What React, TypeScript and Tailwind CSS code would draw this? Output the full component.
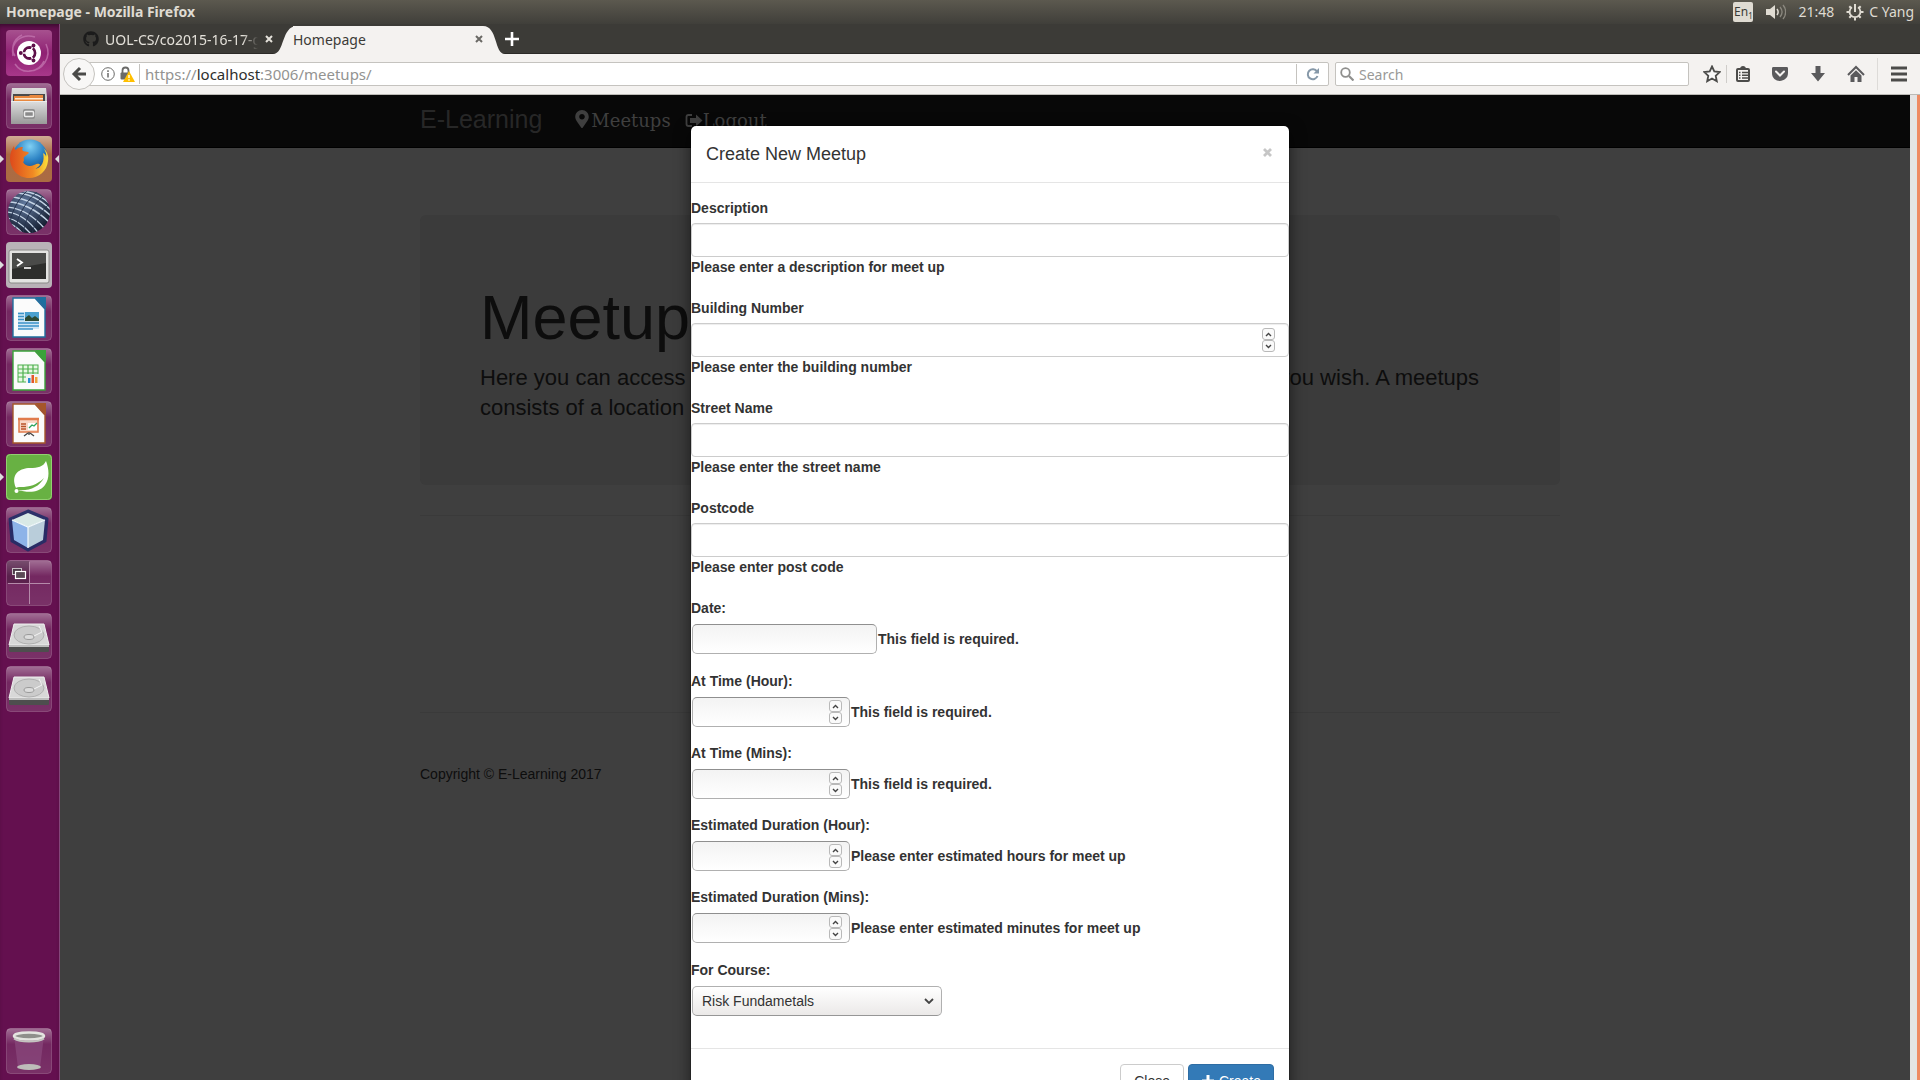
import React from "react";
import { FaGithub, FaMapMarkerAlt } from "react-icons/fa";

/* ---------- Launcher icons ---------- */

function UbuntuIcon() {
  return (
    <svg viewBox="0 0 46 46" className="size-full">
      <defs>
        <linearGradient id="ub" x1="0" y1="0" x2="0" y2="1">
          <stop offset="0" stopColor="#a7518f" />
          <stop offset="0.5" stopColor="#8f2173" />
          <stop offset="1" stopColor="#a8388a" />
        </linearGradient>
      </defs>
      <rect width="46" height="46" rx="4" fill="url(#ub)" />
      <path d="M7 26C4 12 16 3 29 7M40 14c6 13-3 27-17 27M9 34c8 12 24 8 29-3M16 5C6 10 5 20 9 26" fill="none" stroke="#c67bb4" strokeWidth="1.5" opacity="0.7" />
      <circle cx="23" cy="23" r="12" fill="#fff" />
      <circle cx="23.500" cy="23" r="5.500" fill="none" stroke="#5e1049" strokeWidth="2.800" />
      <g stroke="#fff" strokeWidth="1.500">
        <path d="M23.500 23l3.600-7M23.500 23l3.600 7M23.500 23h-8" />
      </g>
      <circle cx="23.500" cy="23" r="3.900" fill="#fff" />
      <g fill="#5e1049">
        <circle cx="14.800" cy="23" r="1.900" />
        <circle cx="27.500" cy="15.500" r="1.900" />
        <circle cx="27.500" cy="30.500" r="1.900" />
      </g>
    </svg>
  );
}

function Tile({ children, fill }: { children: React.ReactNode; fill?: string }) {
  return (
    <svg viewBox="0 0 46 46" className="size-full">
      <defs>
        <linearGradient id="tile" x1="0" y1="0" x2="0" y2="1">
          <stop offset="0" stopColor="#fff" stopOpacity="0.4" />
          <stop offset="0.35" stopColor="#fff" stopOpacity="0.1" />
          <stop offset="1" stopColor="#fff" stopOpacity="0.14" />
        </linearGradient>
        <linearGradient id="metal" x1="0" y1="0" x2="0" y2="1">
          <stop offset="0" stopColor="#dedede" />
          <stop offset="1" stopColor="#9a9a9a" />
        </linearGradient>
      </defs>
      <rect width="46" height="46" rx="4" fill={fill ?? "#64104f"} />
      {!fill && <rect x="0.500" y="0.500" width="45" height="45" rx="4" fill="url(#tile)" stroke="#fff" strokeOpacity="0.18" />}
      {children}
    </svg>
  );
}

function FilesIcon() {
  return (
    <Tile>
      <path d="M6 5h34l1 9v27H5V14z" fill="url(#metal)" />
      <path d="M7 11h32v9H7z" fill="#4b4b4b" />
      <path d="M8 13h15l1-1h13v7H8z" fill="#e8883e" />
      <rect x="9" y="15" width="28" height="1.500" fill="#ffe9cf" />
      <path d="M5 18h36v22a1 1 0 0 1-1 1H6a1 1 0 0 1-1-1z" fill="url(#metal)" />
      <path d="M5 18.500h36" stroke="#ececec" />
      <rect x="17" y="26" width="12" height="10" rx="2" fill="#8f8f8f" />
      <rect x="18.500" y="28.500" width="9" height="5" rx="1" fill="#8a8a8a" stroke="#ececec" strokeWidth="1.500" />
    </Tile>
  );
}

function FirefoxIcon() {
  return (
    <Tile fill="#a9683f">
      <defs>
        <linearGradient id="ffbg" x1="0" y1="0" x2="0" y2="1">
          <stop offset="0" stopColor="#fff" stopOpacity="0.45" />
          <stop offset="0.4" stopColor="#fff" stopOpacity="0.02" />
        </linearGradient>
        <radialGradient id="globe" cx="0.5" cy="0.2" r="0.8">
          <stop offset="0" stopColor="#7fd0f4" />
          <stop offset="0.5" stopColor="#2d83c4" />
          <stop offset="1" stopColor="#123a77" />
        </radialGradient>
        <linearGradient id="fox" x1="0" y1="0" x2="1" y2="0">
          <stop offset="0" stopColor="#dd4a1b" />
          <stop offset="0.6" stopColor="#f08a24" />
          <stop offset="1" stopColor="#fde03a" />
        </linearGradient>
      </defs>
      <rect width="46" height="46" rx="4" fill="url(#ffbg)" />
      <circle cx="24" cy="21" r="17.500" fill="url(#globe)" />
      <path d="M4 22c0-5 2-9 4-12 0 2 1 3 2 4 2-3 5-3 7-3-1 2-1 3 0 4 2 1 5 0 6 2l-5 4c-1 1 1 4-1 5 2 4 7 5 11 3 3-1 5-2 6 0-2 2-4 4-6 4 8 0 11-9 9-16 3 2 3 3 3 4 1-3-1-7-3-9 4 3 6 8 5 13-1 10-9 17-19 17C12 42 4 33 4 22z" fill="url(#fox)" />
    </Tile>
  );
}

function SphereIcon() {
  return (
    <Tile>
      <defs>
        <radialGradient id="sph" cx="0.4" cy="0.3" r="0.7">
          <stop offset="0" stopColor="#5f779c" />
          <stop offset="1" stopColor="#172033" />
        </radialGradient>
        <clipPath id="sphclip">
          <circle cx="23" cy="23" r="21" />
        </clipPath>
      </defs>
      <circle cx="23" cy="23" r="21" fill="url(#sph)" />
      <g clipPath="url(#sphclip)" fill="none" stroke="#c3d2e4" strokeWidth="1.400">
        <path d="M4 8c10 0 28 6 42 20M2 13c12 0 28 7 42 21M1 18c12 1 26 8 38 22M1 23c10 1 22 8 32 22M1 29c8 1 16 7 24 16M3 35c5 1 9 4 13 9M9 4c12 0 25 6 36 17M16 2c10 1 20 5 28 13" />
      </g>
      <g clipPath="url(#sphclip)" fill="none" stroke="#26344f" strokeWidth="1">
        <path d="M40 5C30 12 20 26 17 44M32 2C22 10 12 24 9 42M45 14C36 20 29 32 26 45M22 1C14 8 6 20 4 34" />
      </g>
    </Tile>
  );
}

function TerminalIcon() {
  return (
    <Tile fill="#b9b2b7">
      <rect x="3" y="8" width="40" height="33" rx="2" fill="#e3e3e1" stroke="#8a8a88" />
      <rect x="6" y="11" width="34" height="26" fill="#2d2e2c" />
      <path d="M6 11h34v10L6 27z" fill="#4a4b49" />
      <path d="M11 17l5 3.500-5 3.500" fill="none" stroke="#fff" strokeWidth="1.800" />
      <path d="M18 26h7" stroke="#fff" strokeWidth="1.600" />
    </Tile>
  );
}

function Doc({ color, children }: { color: string; children: React.ReactNode }) {
  return (
    <Tile>
      <path d="M7 3h22l10 11v28H7z" fill="#fbfbfb" stroke={color} strokeWidth="1.400" />
      <path d="M29 2h11v12z" fill={color} />
      {children}
    </Tile>
  );
}

function WriterIcon() {
  return (
    <Doc color="#1e6f9f">
      <rect x="12" y="17" width="21" height="17" fill="#cfe6f5" />
      <path d="M12 18.500h6M12 21.500h6M12 24.500h6M12 28h21M12 31h21M12 34h15" stroke="#3b93c9" strokeWidth="1.500" />
      <rect x="19" y="17" width="14" height="9" fill="#4aa0cf" />
      <path d="M19 26v-3l4-3 3 3 3-2 4 3v2z" fill="#2c4a34" />
    </Doc>
  );
}

function CalcIcon() {
  return (
    <Doc color="#3aa33a">
      <rect x="12" y="17" width="20" height="17" fill="#e8f8e4" stroke="#4db04d" />
      <path d="M12 21h20M12 25h20M12 29h20M17 17v17M22 17v17M27 17v17" stroke="#4db04d" strokeWidth="1.200" />
      <rect x="20" y="26" width="14" height="9" fill="#f2f2f2" />
      <rect x="22" y="30" width="2.500" height="5" fill="#2c8fd0" />
      <rect x="25.500" y="27" width="2.500" height="8" fill="#e2572b" />
      <rect x="29" y="29" width="2.500" height="6" fill="#f0a33a" />
    </Doc>
  );
}

function ImpressIcon() {
  return (
    <Doc color="#a5562a">
      <rect x="13" y="18" width="19" height="13" fill="#f9d9c7" stroke="#e07a4b" strokeWidth="1.500" />
      <path d="M12 18h21" stroke="#e07a4b" strokeWidth="2.500" />
      <path d="M15 23h5M15 25.500h5M15 28h5" stroke="#b9552b" strokeWidth="1.400" />
      <rect x="22" y="22" width="9" height="7" fill="#fff" />
      <path d="M23 27l3-3 2 1 3-3" fill="none" stroke="#2ca45c" strokeWidth="1.300" />
      <path d="M22 32l-4 3M24 32l4 3M23 31v3" stroke="#444" strokeWidth="1.300" />
    </Doc>
  );
}

function SpringIcon() {
  return (
    <Tile fill="#68b143">
      <rect x="0.500" y="0.500" width="45" height="45" rx="4" fill="none" stroke="#93cf72" />
      <path d="M40 7c3 8 4 17-1 24-6 8-17 8-27 5 12 1 21-3 26-12-7 7-15 9-23 9-3 0-4 0-5 1C4 20 14 14 24 14c8 0 13-1 16-7z" fill="#fff" />
      <circle cx="10.500" cy="37" r="2" fill="#fff" />
    </Tile>
  );
}

function CubeIcon() {
  return (
    <Tile>
      <path d="M22 4l19 8-2 22-17 9L6 34 4 12z" fill="#1c2c66" stroke="#1c2c66" strokeWidth="3" strokeLinejoin="round" opacity="0.85" />
      <path d="M22 6l17 7-17 7L6 13z" fill="#d9e9e6" />
      <path d="M6 13l16 7v21L8 33z" fill="#8db3e8" />
      <path d="M39 13l-17 7v21l15-8z" fill="#b9cdda" />
      <path d="M6 13l16 7 17-7M22 20v21" fill="none" stroke="#f3fafc" strokeWidth="1.200" />
    </Tile>
  );
}

function WorkspaceIcon() {
  return (
    <Tile>
      <rect x="1" y="1" width="22" height="22" fill="#2b1327" opacity="0.35" />
      <path d="M23.500 2v42M2 23.500h42" stroke="#b58aaa" strokeWidth="1" />
      <rect x="6.500" y="8.500" width="9" height="6" fill="#4a3a47" stroke="#c9bfc6" />
      <rect x="9.500" y="11.500" width="10" height="7" fill="#5a4a56" stroke="#fff" strokeWidth="1.200" />
    </Tile>
  );
}

function DriveIcon() {
  return (
    <Tile>
      <path d="M8 11h30l5 21H3z" fill="#d8d8d8" stroke="#efefef" />
      <path d="M3 32h40v6a1 1 0 0 1-1 1H5a2 2 0 0 1-2-1z" fill="#4e4e4e" />
      <path d="M3 32h40v2H3z" fill="#bdbdbd" />
      <ellipse cx="23" cy="22" rx="15" ry="9" fill="#cbcbcb" stroke="#b0b0b0" />
      <ellipse cx="23" cy="24" rx="5" ry="2.500" fill="#dcdcdc" stroke="#9a9a9a" />
      <path d="M33 13l3 6-8 4" fill="none" stroke="#f4f4f4" />
    </Tile>
  );
}

function TrashIcon() {
  return (
    <Tile>
      <path d="M8 8h30l-4 32H12z" fill="#8a4a7e" opacity="0.7" />
      <ellipse cx="23" cy="39" rx="12" ry="3" fill="#bdbdb9" />
      <ellipse cx="23" cy="8" rx="15" ry="3.500" fill="#8f8f8b" stroke="#e4e4e0" strokeWidth="2.500" />
      <path d="M8 10.500c6 4 24 4 30 0" fill="none" stroke="#c4c4c0" strokeWidth="2" />
    </Tile>
  );
}

type LauncherItem = { name: string; icon: React.ReactNode; running?: boolean; focused?: boolean };

const launcher: LauncherItem[] = [
  { name: "Search your computer", icon: <UbuntuIcon /> },
  { name: "Files", icon: <FilesIcon /> },
  { name: "Firefox", icon: <FirefoxIcon />, running: true, focused: true },
  { name: "Eclipse", icon: <SphereIcon /> },
  { name: "Terminal", icon: <TerminalIcon />, running: true },
  { name: "Writer", icon: <WriterIcon /> },
  { name: "Calc", icon: <CalcIcon /> },
  { name: "Impress", icon: <ImpressIcon /> },
  { name: "Spring Tool Suite", icon: <SpringIcon />, running: true },
  { name: "NetBeans", icon: <CubeIcon /> },
  { name: "Workspaces", icon: <WorkspaceIcon /> },
  { name: "Volume 1", icon: <DriveIcon /> },
  { name: "Volume 2", icon: <DriveIcon /> },
];

function Launcher() {
  return (
    <nav aria-label="Launcher" className="flex w-[60px] shrink-0 flex-col justify-between border-r border-[#84467a] bg-[#64104f] pt-1.5 pb-1.5 shadow-[inset_0_4px_4px_-2px_#3a0a2e]">
      <div className="flex flex-col gap-[7px]">
        {launcher.map((item) => (
          <div key={item.name} className="relative flex pl-1.5">
            {item.running && (
              <svg viewBox="0 0 4 8" className="absolute top-[19px] left-0 h-2 w-1">
                <path d="M0 0l4 4-4 4z" fill="#ddd" />
              </svg>
            )}
            <button aria-label={item.name} className="size-[46px]">{item.icon}</button>
            {item.focused && (
              <svg viewBox="0 0 4 8" className="absolute top-[19px] right-0 h-2 w-1">
                <path d="M4 0L0 4l4 4z" fill="#ddd" />
              </svg>
            )}
          </div>
        ))}
      </div>
      <div className="flex pl-1.5">
        <button aria-label="Trash" className="size-[46px]"><TrashIcon /></button>
      </div>
    </nav>
  );
}

/* ---------- System panel ---------- */

function TopPanel() {
  return (
    <header className="flex h-6 shrink-0 items-center justify-between bg-linear-to-b from-[#5c594f] to-[#403f3a] pr-1.5 pl-1.5 text-[#dfdbd2]">
      <span className="text-[14px] leading-5 font-bold">Homepage - Mozilla Firefox</span>
      <div className="flex items-center text-[14px] leading-5">
        <span className="mr-[13px] flex h-5 w-5 items-center justify-center rounded-xs bg-[#dfdbd2] text-[12px] text-[#3c3b37]">
          En<span className="self-end text-[8px] leading-3">1</span>
        </span>
        <svg viewBox="0 0 20 18" className="mr-3 h-[18px] w-5">
          <path d="M0 6h4l5-4v14l-5-4H0z" fill="#dfdbd2" />
          <path d="M11 6c1.500 2 1.500 4 0 6" fill="none" stroke="#dfdbd2" strokeWidth="1.500" />
          <path d="M14 4c2.500 3 2.500 7 0 10M17 2c3.500 4 3.500 10 0 14" fill="none" stroke="#8b887f" strokeWidth="1.300" />
        </svg>
        <span className="mr-3">21:48</span>
        <svg viewBox="0 0 18 18" className="mr-[5px] size-[18px]" fill="none" stroke="#dfdbd2">
          <path d="M6 4.300a5.400 5.400 0 1 0 6 0" strokeWidth="1.800" />
          <path d="M9 1v8" strokeWidth="2" />
          <path d="M3.300 3.300l2 2M14.700 3.300l-2 2M.500 9h3M17.500 9h-3M3.300 14.700l2-2M14.700 14.700l-2-2M9 17.500v-3" strokeWidth="2" />
        </svg>
        <span>C Yang</span>
      </div>
    </header>
  );
}

/* ---------- Browser chrome ---------- */

function Cross({ className }: { className: string }) {
  return (
    <svg viewBox="0 0 8 8" className={className}>
      <path d="M1 1l6 6M7 1L1 7" stroke="currentColor" strokeWidth="2" />
    </svg>
  );
}

function TabBar() {
  return (
    <div className="flex h-[30px] shrink-0 items-end border-b border-[#2b2a27] bg-[#3c3b37] text-[14px]">
      <div className="flex h-7 w-[213px] items-center pl-[23px] text-[#e4e1da]">
        <FaGithub className="mr-1.5 size-4 shrink-0 text-[#1b1b1b]" />
        <span className="w-[153px] overflow-hidden mask-r-from-90% whitespace-nowrap">UOL-CS/co2015-16-17-group</span>
        <button aria-label="Close tab" className="ml-[7px]"><Cross className="size-2" /></button>
      </div>
      <div className="-mb-px flex h-7 text-[#3c3b37]">
        <svg viewBox="0 0 24 28" className="h-7 w-6 shrink-0">
          <path d="M0 28C12 28 8 0 24 0v28z" fill="#f4f2f0" />
        </svg>
        <div className="-ml-1 flex w-[190px] items-center justify-between bg-[#f4f2f0] pb-0.5">
          <span>Homepage</span>
          <button aria-label="Close tab" className="text-[#6a6965]"><Cross className="size-2" /></button>
        </div>
        <svg viewBox="0 0 22 28" className="h-7 w-[22px] shrink-0">
          <path d="M22 28C11 28 15 0 0 0v28z" fill="#f4f2f0" />
        </svg>
      </div>
      <button aria-label="New tab" className="flex h-7 w-3.5 items-center justify-center">
        <svg viewBox="0 0 14 14" className="size-3.5 shrink-0">
          <path d="M7 0v14M0 7h14" stroke="#fff" strokeWidth="2.600" />
        </svg>
      </button>
    </div>
  );
}

function Toolbar() {
  return (
    <div className="flex h-[41px] shrink-0 items-center border-b border-[#bcbab6] bg-[#f4f2f0] pr-[13px] pl-[3px] text-[14px]">
      <button aria-label="Back" className="z-10 flex size-8 shrink-0 items-center justify-center rounded-full border border-[#c5c3bf] bg-[#f8f7f6]">
        <svg viewBox="0 0 16 16" className="size-4">
          <path d="M9 2L3 8l6 6M3 8h12" fill="none" stroke="#4a4a48" strokeWidth="3" />
        </svg>
      </button>
      <div className="-ml-4 flex h-6 flex-1 items-center rounded-xs border border-[#c5c3bf] bg-white pl-[21px]">
        <svg viewBox="0 0 14 14" className="mr-1 size-3.5 shrink-0" fill="none" stroke="#6a6a68">
          <circle cx="7" cy="7" r="6.300" />
          <path d="M7 6v4.500M7 3.300V5" strokeWidth="1.500" />
        </svg>
        <svg viewBox="0 0 16 16" className="mr-1 size-4 shrink-0">
          <path d="M3.500 7V4.500a3 3 0 0 1 6 0V7" fill="none" stroke="#6a6a68" strokeWidth="1.800" />
          <rect x="1.500" y="6.500" width="9.500" height="7" rx="1" fill="#6a6a68" />
          <path d="M10 5l6 11H4z" fill="#ffbf00" />
          <path d="M10 9v3M10 13.300v1.400" stroke="#fff" strokeWidth="1.400" />
        </svg>
        <div className="flex-1 border-l border-[#c5c3bf] pl-[5px] text-[15px] leading-5 text-[#939391]">
          https://<span className="text-[#2e2e2c]">localhost</span>:3006/meetups/
        </div>
        <button aria-label="Reload" className="flex h-5 w-8 items-center justify-center border-l border-[#c5c3bf]">
          <svg viewBox="0 0 14 14" className="size-3.5">
            <path d="M11 4.500A5 5 0 1 0 11.500 9" fill="none" stroke="#8698a8" strokeWidth="2" />
            <path d="M13 1v5.500H7.500z" fill="#8698a8" />
          </svg>
        </button>
      </div>
      <div className="ml-1.5 flex h-6 w-[354px] items-center rounded-xs border border-[#c5c3bf] bg-white pl-1">
        <svg viewBox="0 0 14 14" className="mr-[5px] size-3.5 shrink-0" fill="none" stroke="#8f8f8d">
          <circle cx="5.500" cy="5.500" r="4.300" strokeWidth="1.800" />
          <path d="M9 9l4.500 4.500" strokeWidth="2.200" />
        </svg>
        <input aria-label="Search" placeholder="Search" className="min-w-0 flex-1 outline-none placeholder:text-[#999997]" />
      </div>
      <div className="ml-3.5 flex items-center">
        <button aria-label="Bookmark" className="mr-[5px]">
          <svg viewBox="0 0 18 18" className="size-[18px]">
            <path d="M9 1.500l2.300 5 5.400.6-4 3.700 1.100 5.400L9 13.500l-4.800 2.700 1.100-5.400-4-3.700 5.400-.6z" fill="#f8f8f8" stroke="#4c4c4a" strokeWidth="1.800" />
          </svg>
        </button>
        <button aria-label="Bookmarks list" className="mr-5 border-l border-[#cfcdca] pl-2">
          <svg viewBox="0 0 16 18" className="h-[18px] w-4">
            <path d="M5 4c0-4 6-4 6 0z" fill="#4c4c4a" />
            <rect x="2" y="4" width="12" height="12" rx="1" fill="#f4f2f0" stroke="#4c4c4a" strokeWidth="2" />
            <path d="M4 7.500h1.500M7 7.500h6M4 10.200h1.500M7 10.200h6M4 13h1.500M7 13h6" stroke="#4c4c4a" strokeWidth="1.500" />
          </svg>
        </button>
        <button aria-label="Pocket" className="mr-[21px]">
          <svg viewBox="0 0 18 16" className="h-4 w-[18px]">
            <path d="M1 2.500C1 1.500 1.500 1 2.500 1h13c1 0 1.500.5 1.500 1.500V7c0 10-16 11-16 0z" fill="#5a5a5c" />
            <path d="M5 5.500l4 4 4-4" fill="none" stroke="#f4f2f0" strokeWidth="2" strokeLinecap="round" />
          </svg>
        </button>
        <button aria-label="Downloads" className="mr-[21px]">
          <svg viewBox="0 0 16 16" className="size-4">
            <path d="M5.500 0h5v7H15l-7 8.500L1 7h4.500z" fill="#5a5a5c" />
          </svg>
        </button>
        <button aria-label="Home" className="mr-3">
          <svg viewBox="0 0 18 18" className="size-[18px]">
            <path d="M1 10l8-8 8 8" fill="none" stroke="#5a5a5c" strokeWidth="2" />
            <path d="M3.500 10.500L9 5.300l5.500 5.200V17h-4v-5h-3v5h-4z" fill="#5a5a5c" />
          </svg>
        </button>
        <button aria-label="Menu" className="flex h-8 items-center border-l border-[#dddbd8] pl-[13px]">
          <svg viewBox="0 0 16 16" className="size-4">
            <path d="M0 2h16M0 8h16M0 14h16" stroke="#4c4c4a" strokeWidth="3" />
          </svg>
        </button>
      </div>
    </div>
  );
}

/* ---------- Page behind the dialog ---------- */

function Page() {
  return (
    <div className="h-full bg-[#3f3f3f] text-[#0d0d0d]">
      <div className="h-[53px] border-b border-black bg-[#080808]">
        <div className="mx-auto flex max-w-[1140px] items-start">
          <a href="#home" className="mr-[33px] pt-2 text-[25px] leading-8 text-[#272727]">E-Learning</a>
          <a href="#meetups" className="mr-3.5 flex items-start pt-3 font-['DejaVu_Serif',serif] text-[18px] leading-7 text-[#3f3f3f]">
            <FaMapMarkerAlt className="mt-[3px] mr-0.5 h-[18px] w-3.5" />Meetups
          </a>
          <a href="#logout" className="flex items-start pt-3 font-['DejaVu_Serif',serif] text-[18px] leading-7 text-[#3f3f3f]">
            <svg viewBox="0 0 18 16" className="mt-1.5 h-4 w-[18px]">
              <path d="M7 2H3.500C2 2 1.500 2.500 1.500 4v7c0 1.500.5 2 2 2H7" fill="none" stroke="#3f3f3f" strokeWidth="1.800" />
              <path d="M5 5h6V1.500L17.500 7.500 11 13.500V10H5z" fill="#3f3f3f" />
            </svg>
            Logout
          </a>
        </div>
      </div>
      <div className="mx-auto max-w-[1140px] pt-[67px]">
        <section className="mb-[30px] rounded-md bg-[#3b3b3b] px-[60px] pt-[67px] pb-[62px]">
          <h1 className="mb-[11px] text-[63px] leading-[70px]">Meetups</h1>
          <p className="text-[22px] leading-[30px]">
            Here you can access your meetups, and create a new meetup for others to join, if you wish. A meetups consists of a location and a time.
          </p>
        </section>
        <hr className="border-[#3a3a3a]" />
        <hr className="mt-[196px] border-[#3a3a3a]" />
        <p className="mt-[51px] text-[14px] leading-5">Copyright © E-Learning 2017</p>
      </div>
    </div>
  );
}

/* ---------- Dialog ---------- */

function Stepper({ name }: { name: string }) {
  return (
    <span className="flex flex-col">
      <button type="button" aria-label={`Increase ${name}`} className="flex h-3 w-[13px] items-center justify-center rounded-[3px] border border-[#b9b9b9] bg-[#fafafa]">
        <svg viewBox="0 0 7 5" className="h-[5px] w-[7px]"><path d="M1 4l2.500-2.500L6 4" fill="none" stroke="#444" strokeWidth="1.400" /></svg>
      </button>
      <button type="button" aria-label={`Decrease ${name}`} className="flex h-3 w-[13px] items-center justify-center rounded-[3px] border border-[#b9b9b9] bg-[#fafafa]">
        <svg viewBox="0 0 7 5" className="h-[5px] w-[7px]"><path d="M1 1l2.500 2.500L6 1" fill="none" stroke="#444" strokeWidth="1.400" /></svg>
      </button>
    </span>
  );
}

const noSpin =
  "[appearance:textfield] [&::-webkit-inner-spin-button]:appearance-none [&::-webkit-outer-spin-button]:appearance-none";

function WideField({ id, label, message, numeric }: { id: string; label: string; message: string; numeric?: boolean }) {
  return (
    <div className="mb-[21px]">
      <label htmlFor={id} className="mb-[5px] block font-bold">{label}</label>
      <div className="flex h-[34px] items-center rounded-sm border border-[#ccc] bg-white px-[13px] shadow-[inset_0_1px_1px_rgba(0,0,0,0.075)]">
        <input id={id} type={numeric ? "number" : "text"} className={`min-w-0 flex-1 outline-none ${noSpin}`} />
        {numeric && <Stepper name={label} />}
      </div>
      <label htmlFor={id} className="block font-bold">{message}</label>
    </div>
  );
}

function SmallField({ id, label, message }: { id: string; label: string; message: string }) {
  return (
    <div className="mb-4">
      <label htmlFor={id} className="mb-1.5 block font-bold">{label}</label>
      <div className="flex items-center">
        <div className="mx-px flex h-[30px] w-[158px] items-center rounded-[5px] border border-[#b0b0b0] border-t-[#8f8f8f] bg-linear-to-b from-[#f3f3f3] to-white pr-[7px] pl-2">
          <input id={id} type="number" className={`min-w-0 flex-1 outline-none ${noSpin}`} />
          <Stepper name={label} />
        </div>
        <label htmlFor={id} className="font-bold">{message}</label>
      </div>
    </div>
  );
}

function Dialog() {
  return (
    <div role="dialog" aria-labelledby="dialog-title" className="absolute inset-0 flex items-start justify-center overflow-hidden pt-[30px]">
      <div className="w-[600px] rounded-md border border-black/20 bg-white bg-clip-padding text-[14px] leading-5 text-[#333] shadow-[0_5px_15px_rgba(0,0,0,0.5)]">
        <div className="flex items-start justify-between border-b border-[#e5e5e5] p-[15px]">
          <h4 id="dialog-title" className="text-[18px] leading-[26px]">Create New Meetup</h4>
          <button aria-label="Close" className="mt-[7px] mr-0.5 text-[#c6c6c6]">
            <svg viewBox="0 0 9 9" className="size-[9px]"><path d="M1 1l7 7M8 1L1 8" stroke="currentColor" strokeWidth="2.800" /></svg>
          </button>
        </div>
        <form>
          <div className="pt-[15px] pb-4">
            <WideField id="description" label="Description" message="Please enter a description for meet up" />
            <WideField id="building" label="Building Number" message="Please enter the building number" numeric />
            <WideField id="street" label="Street Name" message="Please enter the street name" />
            <WideField id="postcode" label="Postcode" message="Please enter post code" />
            <div className="mb-[17px]">
              <label htmlFor="date" className="mb-1.5 block font-bold">Date:</label>
              <div className="flex items-center">
                <input id="date" type="text" className="mx-px h-[30px] w-[185px] rounded-[5px] border border-[#b0b0b0] border-t-[#8f8f8f] bg-linear-to-b from-[#f3f3f3] to-white px-2 outline-none" />
                <label htmlFor="date" className="font-bold">This field is required.</label>
              </div>
            </div>
            <SmallField id="hour" label="At Time (Hour):" message="This field is required." />
            <SmallField id="mins" label="At Time (Mins):" message="This field is required." />
            <SmallField id="dhour" label="Estimated Duration (Hour):" message="Please enter estimated hours for meet up" />
            <SmallField id="dmins" label="Estimated Duration (Mins):" message="Please enter estimated minutes for meet up" />
            <div className="mt-[17px] mb-4">
              <label htmlFor="course" className="mb-1.5 block font-bold">For Course:</label>
              <div className="relative mx-px w-[250px]">
                <select id="course" className="h-[30px] w-full appearance-none rounded-[5px] border border-[#b0b0b0] border-b-[#969696] bg-linear-to-b from-white to-[#ebe9e8] px-[9px]">
                  <option>Risk Fundametals</option>
                </select>
                <svg viewBox="0 0 10 6" className="pointer-events-none absolute top-3 right-2 h-1.5 w-2.5"><path d="M1 1l4 4 4-4" fill="none" stroke="#444" strokeWidth="1.800" /></svg>
              </div>
            </div>
          </div>
          <div className="flex justify-end gap-1 border-t border-[#e5e5e5] p-[15px]">
            <button type="button" className="h-[34px] rounded-sm border border-[#ccc] bg-white px-[13px]">Close</button>
            <button type="submit" className="flex h-[34px] items-center gap-1 rounded-sm border border-[#2e6da4] bg-[#337ab7] px-3 text-white">
              <svg viewBox="0 0 14 14" className="size-3.5"><path d="M7 1v12M1 7h12" stroke="#fff" strokeWidth="3" /></svg>
              Create
            </button>
          </div>
        </form>
      </div>
    </div>
  );
}

export default function App() {
  return (
    <div className="flex h-screen flex-col overflow-hidden bg-[#3c3b37] font-['Noto_Sans',sans-serif]">
      <TopPanel />
      <div className="flex min-h-0 flex-1">
        <Launcher />
        <div className="flex min-w-0 flex-1 flex-col">
          <TabBar />
          <Toolbar />
          <main className="relative min-h-0 flex-1 overflow-hidden font-['Liberation_Sans',sans-serif]">
            <Page />
            <Dialog />
            <div className="absolute inset-y-0 right-0 w-2.5 border-r-[3px] border-[#ef8a62] bg-[#e5e4e4]" />
          </main>
        </div>
      </div>
    </div>
  );
}
